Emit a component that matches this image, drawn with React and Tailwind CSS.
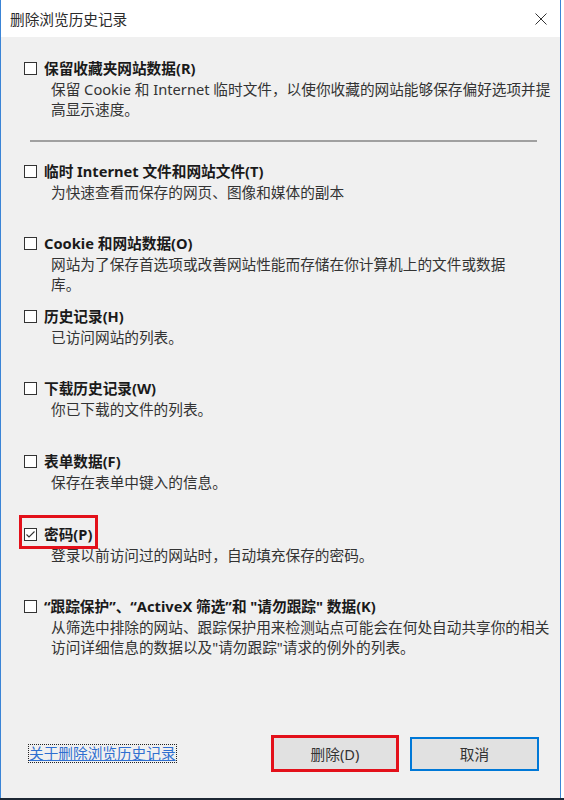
import React from "react";

const items = [
  {
    label: "临时 Internet 文件和网站文件(T)",
    desc: ["为快速查看而保存的网页、图像和媒体的副本"],
  },
  {
    label: "Cookie 和网站数据(O)",
    desc: ["网站为了保存首选项或改善网站性能而存储在你计算机上的文件或数据", "库。"],
  },
  { label: "历史记录(H)", desc: ["已访问网站的列表。"] },
  { label: "下载历史记录(W)", desc: ["你已下载的文件的列表。"] },
  { label: "表单数据(F)", desc: ["保存在表单中键入的信息。"] },
  { label: "密码(P)", desc: ["登录以前访问过的网站时，自动填充保存的密码。"], checked: true, mark: true },
  {
    label: "“跟踪保护”、“ActiveX 筛选”和 \"请勿跟踪\" 数据(K)",
    desc: ["从筛选中排除的网站、跟踪保护用来检测站点可能会在何处自动共享你的相关", "访问详细信息的数据以及\"请勿跟踪\"请求的例外的列表。"],
  },
];

function Box({ checked }) {
  return (
    <div className="w-[13px] h-[13px] border border-[#333333] bg-white flex items-center justify-center shrink-0">
      {checked && (
        <svg width="11" height="11" viewBox="0 0 11 11">
          <path d="M1.5 5.5 L4 8 L9.5 2.5" fill="none" stroke="#333" strokeWidth="1.1" />
        </svg>
      )}
    </div>
  );
}

function Row({ item, first }) {
  return (
    <div className={"relative " + (first ? "" : "h-[72.67px]")}>
      {item.mark && (
        <div className="absolute left-[18px] top-[-9px] w-[79px] h-[34px] border-[3px] border-[#e3101a]" />
      )}
      <div className="flex items-center h-[21px] pl-[23px]">
        <Box checked={item.checked} />
        <span className="ml-[7px] font-bold text-[14.67px] text-[#1a1a1a] whitespace-nowrap leading-[21px]">
          {item.label}
        </span>
      </div>
      <div className="pl-[50px] text-[14.67px] leading-[20px] text-[#333333] whitespace-nowrap">
        {item.desc.map((d, i) => (
          <div key={i}>{d}</div>
        ))}
      </div>
    </div>
  );
}

export default function App() {
  return (
    <div className="w-[564px] h-[800px] bg-white font-['Noto_Sans','Noto_Sans_CJK_SC',sans-serif] flex flex-col">
      <div className="w-[561px] h-[798px] border-x border-[#3a84d6] flex flex-col bg-[#f0f0f0]">
        <div className="h-[37px] bg-white flex items-center justify-between pl-[9px] pr-[13px]">
          <span className="text-[14.67px] text-[#2b2b2b] pt-[1px]">删除浏览历史记录</span>
          <svg width="12" height="12" viewBox="0 0 12 12" className="mt-[1px]">
            <path d="M0.5 0.5 L11.5 11.5 M11.5 0.5 L0.5 11.5" stroke="#333" strokeWidth="1" />
          </svg>
        </div>
        <div className="pt-[20.5px]">
          <Row
            first
            item={{
              label: "保留收藏夹网站数据(R)",
              desc: ["保留 Cookie 和 Internet 临时文件，以使你收藏的网站能够保存偏好选项并提", "高显示速度。"],
            }}
          />
          <div className="mt-[21px] mb-[19px] ml-[29px] w-[507px] h-[2px] bg-[#a0a0a0]" />
          {items.map((it, i) => (
            <Row key={i} item={it} />
          ))}
        </div>
        <div className="mt-[66px] flex items-center h-[37px] pl-[28px] pr-[21px]">
          <span className="text-[14.67px] text-[#2f6fd0] underline outline-1 outline-dotted outline-[#222] leading-[17px] whitespace-nowrap">
            关于删除浏览历史记录
          </span>
          <div className="ml-auto flex items-center gap-[11px]">
            <button className="w-[128px] h-[37px] border-[3px] border-[#e3101a] bg-[#e1e1e1] text-[14.67px] text-[#333]">
              删除(D)
            </button>
            <button className="w-[129px] h-[34px] border-2 border-[#0078d7] bg-[#e1e1e1] text-[14.67px] text-[#333]">
              取消
            </button>
          </div>
        </div>
      </div>
      <div className="h-[2px] bg-[#1d2733]" />
    </div>
  );
}
